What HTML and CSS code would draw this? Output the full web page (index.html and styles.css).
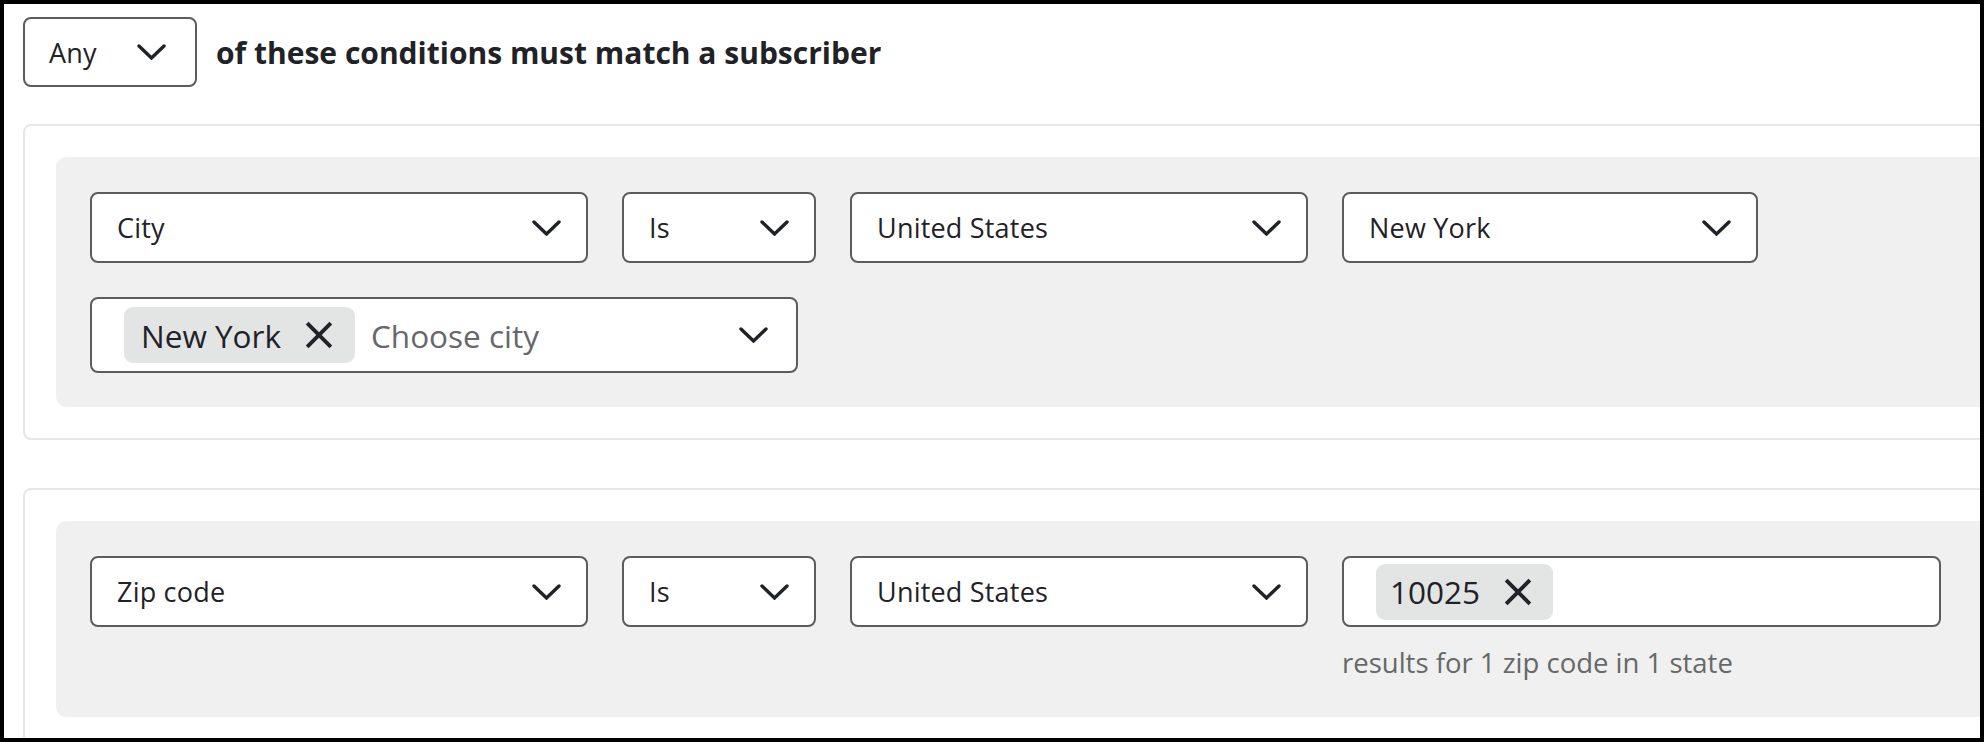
FILE: index.html
```html
<!DOCTYPE html>
<html lang="en">
<head>
<meta charset="utf-8">
<title>Segment conditions</title>
<link rel="stylesheet" href="styles.css">
</head>
<body>
<div class="frame">
  <div class="header">
    <div class="select select-any">
      <span class="value">Any</span>
      <svg class="chev" viewBox="0 0 29 16"><path d="M2 2 L14.5 14 L27 2"/></svg>
    </div>
    <h1 class="title">of these conditions must match a subscriber</h1>
  </div>

  <div class="card">
    <div class="panel">
      <div class="rows">
        <div class="row">
          <div class="select w-field"><span class="value">City</span><svg class="chev" viewBox="0 0 29 16"><path d="M2 2 L14.5 14 L27 2"/></svg></div>
          <div class="select w-op"><span class="value">Is</span><svg class="chev" viewBox="0 0 29 16"><path d="M2 2 L14.5 14 L27 2"/></svg></div>
          <div class="select w-country"><span class="value">United States</span><svg class="chev" viewBox="0 0 29 16"><path d="M2 2 L14.5 14 L27 2"/></svg></div>
          <div class="select w-state"><span class="value">New York</span><svg class="chev" viewBox="0 0 29 16"><path d="M2 2 L14.5 14 L27 2"/></svg></div>
        </div>
        <div class="row">
          <div class="select multi w-city">
            <span class="chip chip-city"><span class="chip-text">New York</span><svg class="x" viewBox="0 0 26 26"><path d="M2 2 L24 24 M24 2 L2 24"/></svg></span>
            <span class="placeholder">Choose city</span>
            <svg class="chev" viewBox="0 0 29 16"><path d="M2 2 L14.5 14 L27 2"/></svg>
          </div>
        </div>
      </div>
    </div>
  </div>

  <div class="card card-2">
    <div class="panel">
      <div class="row">
        <div class="select w-field"><span class="value">Zip code</span><svg class="chev" viewBox="0 0 29 16"><path d="M2 2 L14.5 14 L27 2"/></svg></div>
        <div class="select w-op"><span class="value">Is</span><svg class="chev" viewBox="0 0 29 16"><path d="M2 2 L14.5 14 L27 2"/></svg></div>
        <div class="select w-country"><span class="value">United States</span><svg class="chev" viewBox="0 0 29 16"><path d="M2 2 L14.5 14 L27 2"/></svg></div>
        <div class="zip-col">
          <div class="select zip-box">
            <span class="chip chip-zip"><span class="chip-text">10025</span><svg class="x" viewBox="0 0 26 26"><path d="M2 2 L24 24 M24 2 L2 24"/></svg></span>
          </div>
          <p class="helper">results for 1 zip code in 1 state</p>
        </div>
      </div>
    </div>
  </div>
</div>
</body>
</html>
```

FILE: styles.css
```css
html, body {
  margin: 0;
  padding: 0;
  background: #000;
}

.frame {
  box-sizing: border-box;
  width: 1984px;
  height: 742px;
  border: 4px solid #000;
  background: #fff;
  overflow: hidden;
  padding: 13px 0 0 19px;
  font-family: "Open Sans", "Noto Sans", sans-serif;
  color: #1f2227;
}

.header {
  display: flex;
  align-items: center;
  gap: 19px;
  height: 70px;
}

.title {
  margin: 0;
  font-size: 30px;
  font-weight: 700;
  letter-spacing: 0;
  color: #1f2227;
}

.select {
  box-sizing: border-box;
  height: 71px;
  border: 2px solid #5b5c5d;
  border-radius: 8px;
  background: #fff;
  display: flex;
  align-items: center;
  justify-content: space-between;
  padding: 0 25px;
  font-size: 27px;
  letter-spacing: 0.2px;
  flex: none;
}

.select-any {
  width: 174px;
  height: 70px;
  padding: 0 29px 0 24px;
}

.chev {
  width: 29px;
  height: 16px;
  flex: none;
  fill: none;
  stroke: #1f2227;
  stroke-width: 3.4;
  stroke-linecap: round;
  stroke-linejoin: miter;
}

.card {
  box-sizing: border-box;
  width: 2100px;
  margin-top: 37px;
  border: 2px solid #e6e7e7;
  border-radius: 8px;
  padding: 31px;
}

.card-2 {
  margin-top: 48px;
}

.panel {
  background: #eff0ef;
  border-radius: 10px;
  padding: 35px 34px 34px 34px;
}

.card-2 .panel {
  padding-bottom: 36px;
}

.rows {
  display: flex;
  flex-direction: column;
  gap: 34px;
}

.row {
  display: flex;
  align-items: flex-start;
  gap: 34px;
}

.w-field { width: 498px; }
.w-op { width: 194px; }
.w-country { width: 458px; }
.w-state { width: 416px; }
.w-city { width: 708px; }

.multi {
  height: 76px;
  padding: 0 28px 0 32px;
  justify-content: flex-start;
  gap: 16px;
}

.placeholder {
  flex: 1;
  color: #66686a;
  font-size: 31.5px;
  letter-spacing: 0;
}

.chip {
  box-sizing: border-box;
  height: 56px;
  border-radius: 9px;
  background: #e3e5e5;
  display: inline-flex;
  align-items: center;
  font-size: 31.5px;
  letter-spacing: 0;
  color: #1f2227;
}

.chip-city {
  padding: 0 22px 0 17px;
  gap: 24px;
}

.chip-zip {
  padding: 0 21px 0 14px;
  gap: 24px;
}

.x {
  width: 28px;
  height: 28px;
  flex: none;
  fill: none;
  stroke: #1f2227;
  stroke-width: 3.6;
  stroke-linecap: butt;
}

.zip-col {
  display: flex;
  flex-direction: column;
}

.zip-box {
  width: 599px;
  padding: 0 32px;
  justify-content: flex-start;
}

.helper {
  margin: 18px 0 0 0;
  font-size: 27.5px;
  line-height: 36px;
  color: #66686a;
}
```
